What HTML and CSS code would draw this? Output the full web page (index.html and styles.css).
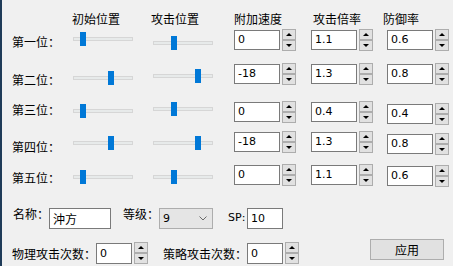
FILE: index.html
```html
<!DOCTYPE html>
<html>
<head>
<meta charset="utf-8">
<link rel="stylesheet" href="styles.css">
</head>
<body>
<div class="win">
  <div class="table">
    <div class="row head">
      <div></div>
      <div class="h ml-1">初始位置</div>
      <div class="h ml-2">攻击位置</div>
      <div class="h">附加速度</div>
      <div class="h ml2">攻击倍率</div>
      <div class="h ml-4">防御率</div>
    </div>

    <div class="row r1">
      <div class="lbl m6">第一位：</div>
      <div class="slider m3"><div class="track"></div><div class="thumb" style="left:7px"></div></div>
      <div class="slider m7"><div class="track"></div><div class="thumb" style="left:18px"></div></div>
      <div class="spin m1"><div class="box">0</div><div class="btns"><div class="btn"><i class="up"></i></div><div class="btn"><i class="dn"></i></div></div></div>
      <div class="spin m1"><div class="box">1.1</div><div class="btns"><div class="btn"><i class="up"></i></div><div class="btn"><i class="dn"></i></div></div></div>
      <div class="spin m1"><div class="box">0.6</div><div class="btns"><div class="btn"><i class="up"></i></div><div class="btn"><i class="dn"></i></div></div></div>
    </div>

    <div class="row r2">
      <div class="lbl m10">第二位：</div>
      <div class="slider m8"><div class="track"></div><div class="thumb" style="left:35px"></div></div>
      <div class="slider m6"><div class="track"></div><div class="thumb" style="left:42px"></div></div>
      <div class="spin m1"><div class="box">-18</div><div class="btns"><div class="btn"><i class="up"></i></div><div class="btn"><i class="dn"></i></div></div></div>
      <div class="spin m1"><div class="box">1.3</div><div class="btns"><div class="btn"><i class="up"></i></div><div class="btn"><i class="dn"></i></div></div></div>
      <div class="spin m1"><div class="box">0.8</div><div class="btns"><div class="btn"><i class="up"></i></div><div class="btn"><i class="dn"></i></div></div></div>
    </div>

    <div class="row r3">
      <div class="lbl m2">第三位：</div>
      <div class="slider m3"><div class="track"></div><div class="thumb" style="left:7px"></div></div>
      <div class="slider m1"><div class="track"></div><div class="thumb" style="left:18px"></div></div>
      <div class="spin m1"><div class="box">0</div><div class="btns"><div class="btn"><i class="up"></i></div><div class="btn"><i class="dn"></i></div></div></div>
      <div class="spin m1"><div class="box">0.4</div><div class="btns"><div class="btn"><i class="up"></i></div><div class="btn"><i class="dn"></i></div></div></div>
      <div class="spin m3"><div class="box">0.4</div><div class="btns"><div class="btn"><i class="up"></i></div><div class="btn"><i class="dn"></i></div></div></div>
    </div>

    <div class="row r4">
      <div class="lbl m9">第四位：</div>
      <div class="slider m5"><div class="track"></div><div class="thumb" style="left:35px"></div></div>
      <div class="slider m5"><div class="track"></div><div class="thumb" style="left:42px"></div></div>
      <div class="spin m1"><div class="box">-18</div><div class="btns"><div class="btn"><i class="up"></i></div><div class="btn"><i class="dn"></i></div></div></div>
      <div class="spin m1"><div class="box">1.3</div><div class="btns"><div class="btn"><i class="up"></i></div><div class="btn"><i class="dn"></i></div></div></div>
      <div class="spin m3"><div class="box">0.8</div><div class="btns"><div class="btn"><i class="up"></i></div><div class="btn"><i class="dn"></i></div></div></div>
    </div>

    <div class="row r5">
      <div class="lbl m7">第五位：</div>
      <div class="slider m6"><div class="track"></div><div class="thumb" style="left:7px"></div></div>
      <div class="slider m6"><div class="track"></div><div class="thumb" style="left:18px"></div></div>
      <div class="spin m1"><div class="box">0</div><div class="btns"><div class="btn"><i class="up"></i></div><div class="btn"><i class="dn"></i></div></div></div>
      <div class="spin m1"><div class="box">1.1</div><div class="btns"><div class="btn"><i class="up"></i></div><div class="btn"><i class="dn"></i></div></div></div>
      <div class="spin m2"><div class="box">0.6</div><div class="btns"><div class="btn"><i class="up"></i></div><div class="btn"><i class="dn"></i></div></div></div>
    </div>
  </div>

  <div class="line1">
    <div class="lbl">名称：</div>
    <div class="field name">沖方</div>
    <div class="lbl grade">等级：</div>
    <div class="combo"><span class="num">9</span><svg width="8" height="5" viewBox="0 0 8 5"><polyline points="0.5,0.5 4,4 7.5,0.5" fill="none" stroke="#6a6a6a" stroke-width="1"/></svg></div>
    <div class="sp">SP:</div>
    <div class="field short num">10</div>
  </div>

  <div class="line2">
    <div class="lbl">物理攻击次数：</div>
    <div class="spin"><div class="box small">0</div><div class="btns"><div class="btn"><i class="up"></i></div><div class="btn"><i class="dn"></i></div></div></div>
    <div class="lbl strat">策略攻击次数：</div>
    <div class="spin"><div class="box small">0</div><div class="btns"><div class="btn"><i class="up"></i></div><div class="btn"><i class="dn"></i></div></div></div>
    <div class="apply">应用</div>
  </div>
</div>
</body>
</html>
```

FILE: styles.css
```css
html, body {
  margin: 0;
  padding: 0;
  background: #f0f0f0;
}
body {
  width: 453px;
  height: 266px;
  overflow: hidden;
  font-family: "Noto Sans CJK SC", "Noto Sans", sans-serif;
  font-size: 12px;
  color: #000;
}
.win {
  box-sizing: border-box;
  height: 266px;
  border-left: 2px solid #1f3b58;
  padding-left: 10px;
}
.table {
  padding-top: 12px;
}
.row {
  display: grid;
  grid-template-columns: 61px 80px 81px 77px 76px 62px;
  align-items: start;
}

.head { height: 17px; }
.r1 { height: 34px; }
.r2 { height: 38px; }
.r3 { height: 30px; }
.r4 { height: 33px; }
.r5 { height: 30px; }

.h {
  line-height: 14px;
  white-space: nowrap;
}
.ml-1 { margin-left: -1px; }
.ml-2 { margin-left: -2px; }
.ml2 { margin-left: 2px; }
.ml-4 { margin-left: -4px; }

.lbl {
  line-height: 14px;
  white-space: nowrap;
}
.m1 { margin-top: 1px; }
.m2 { margin-top: 2px; }
.m3 { margin-top: 3px; }
.m5 { margin-top: 5px; }
.m6 { margin-top: 6px; }
.m7 { margin-top: 7px; }
.m8 { margin-top: 8px; }
.m9 { margin-top: 9px; }
.m10 { margin-top: 10px; }

.slider {
  position: relative;
  width: 60px;
  height: 14px;
}
.track {
  box-sizing: border-box;
  margin-top: 5px;
  width: 60px;
  height: 4px;
  border: 1px solid #d6d6d6;
  background: #e7eaea;
}
.thumb {
  position: absolute;
  top: 0;
  width: 6px;
  height: 14px;
  background: #0078d7;
}

.spin {
  display: flex;
  align-items: flex-start;
  gap: 2px;
}
.box {
  box-sizing: border-box;
  width: 46px;
  height: 20px;
  border: 1px solid #7a7a7a;
  background: #fff;
  padding-left: 3px;
  font-family: "DejaVu Sans", sans-serif;
  font-size: 11px;
  line-height: 18px;
}
.box.small { width: 36px; height: 21px; line-height: 19px; }
.btns {
  display: flex;
  flex-direction: column;
  margin-top: -1px;
}
.btn {
  box-sizing: border-box;
  width: 14px;
  height: 11px;
  border: 1px solid #adadad;
  background: #e1e1e1;
  display: flex;
  align-items: center;
  justify-content: center;
}
.up, .dn {
  display: block;
  width: 0;
  height: 0;
  border-left: 3px solid transparent;
  border-right: 3px solid transparent;
}
.up { border-bottom: 3px solid #000; }
.dn { border-top: 3px solid #000; }

.line1 {
  display: flex;
  align-items: flex-start;
  margin-top: 13px;
  padding-left: 1px;
}
.field {
  box-sizing: border-box;
  height: 21px;
  margin-top: 1px;
  border: 1px solid #7a7a7a;
  background: #fff;
  padding-left: 3px;
  line-height: 19px;
}
.name { width: 62px; }
.grade { margin-left: 12px; }
.combo {
  box-sizing: border-box;
  width: 54px;
  height: 21px;
  margin-top: 1px;
  border: 1px solid #adadad;
  background: #e5e5e5;
  display: flex;
  align-items: center;
  justify-content: space-between;
  padding: 0 5px 0 3px;
}
.num {
  font-family: "DejaVu Sans", sans-serif;
  font-size: 11px;
}
.sp {
  margin-left: 15px;
  margin-top: 1px;
  font-family: "DejaVu Sans", sans-serif;
  font-size: 11px;
  line-height: 20px;
  width: 19px;
}
.short { width: 36px; }

.line2 {
  display: flex;
  align-items: flex-start;
  margin-top: 14px;
}
.line2 .lbl { margin-top: 4px; }
.line2 .strat { margin-left: 15px; }
.apply {
  box-sizing: border-box;
  margin-left: 71px;
  margin-top: -4px;
  width: 74px;
  height: 21px;
  border: 1px solid #adadad;
  background: #e1e1e1;
  text-align: center;
  line-height: 19px;
}
```
